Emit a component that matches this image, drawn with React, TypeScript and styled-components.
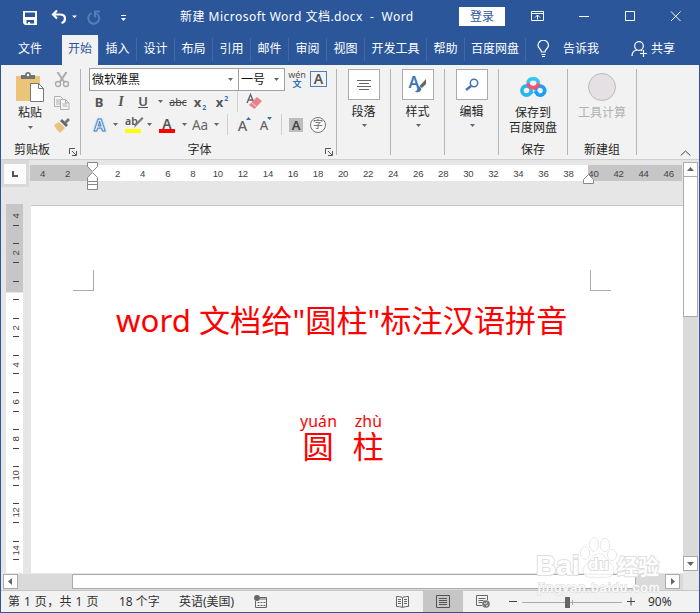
import React from "react";
import styled, { createGlobalStyle, css } from "styled-components";

const BLUE = "#2b579a";
const GRAY = "#666666";

const GlobalStyle = createGlobalStyle`
  * { box-sizing: border-box; }
  body { margin: 0; overflow: hidden; }
  svg { display: block; flex: none; }
`;

const Window = styled.div`
  position: relative;
  width: 700px;
  height: 613px;
  display: flex;
  flex-direction: column;
  border: solid ${BLUE};
  border-width: 0 1px 1px;
  background: #e6e6e6;
  color: #262626;
  font: 12px/16px "Noto Sans", "Noto Sans CJK SC", sans-serif;
  white-space: nowrap;
  overflow: hidden;
`;

/* ---------- title bar ---------- */
const TitleBar = styled.header`
  height: 35px;
  flex: none;
  display: flex;
  align-items: center;
  padding-bottom: 3px;
  background: ${BLUE};
  color: #fff;
`;
const QuickAccess = styled.div`
  width: 179px;
  padding: 4px 0 0 21px;
  display: flex;
`;
const Title = styled.div`
  width: 279px;
  padding-top: 1px;
  white-space: pre;
  letter-spacing: 0.48px;
`;
const LoginButton = styled.button`
  width: 46px;
  height: 19px;
  margin-top: 1px;
  padding: 0;
  border: 0;
  background: #fff;
  color: ${BLUE};
  font: inherit;
  line-height: 19px;
`;
const WindowControls = styled.div`
  display: flex;
  margin-left: 25px;
`;

/* ---------- tabs ---------- */
const TabBar = styled.nav`
  height: 30px;
  flex: none;
  display: flex;
  background: ${BLUE};
  color: #fff;
`;
const Tab = styled.div<{ $w: number; $active?: boolean; $rule?: boolean; $file?: boolean }>`
  width: ${(p) => p.$w}px;
  display: flex;
  justify-content: center;
  line-height: 28px;
  padding-right: ${(p) => (p.$file ? 3 : 0)}px;
  ${(p) => p.$active && css`background: #f2f2f2; color: ${BLUE};`}
  ${(p) =>
    p.$rule &&
    css`
      padding-left: 1px;
      background: linear-gradient(#44699f, #44699f) 0 3px / 1px 23px no-repeat;
    `}
`;
const TabTool = styled.div<{ $ml: number; $gap: number }>`
  display: flex;
  align-items: center;
  gap: ${(p) => p.$gap}px;
  height: 28px;
  margin-left: ${(p) => p.$ml}px;
`;

/* ---------- ribbon ---------- */
const Ribbon = styled.section`
  height: 95px;
  flex: none;
  display: flex;
  padding-top: 4px;
  background: #f2f2f2;
  border-bottom: 1px solid #d0d0d0;
`;
const Group = styled.div<{ $w: number }>`
  width: ${(p) => p.$w}px;
  height: 86px;
  display: flex;
  flex-direction: column;
  border-right: 1px solid #b4b4b4;
`;
const GroupBody = styled.div<{ $center?: boolean }>`
  height: 72px;
  flex: none;
  display: flex;
  ${(p) => p.$center && css`flex-direction: column; align-items: center;`}
`;
const GroupFooter = styled.div`
  height: 16px;
  display: flex;
`;
const GroupLabel = styled.div<{ $inset?: number }>`
  flex: 1;
  text-align: center;
  line-height: 17px;
  padding-right: ${(p) => p.$inset ?? 0}px;
`;
const Launcher = styled.div<{ $mr: number }>`
  margin: 7px ${(p) => p.$mr}px 0 0;
`;
const PasteButton = styled.div`
  width: 36px;
  margin-left: 11px;
  padding-top: 3px;
  display: flex;
  flex-direction: column;
  align-items: center;
`;
const PasteText = styled.div`
  margin: 2px 0 5px;
`;
const ClipColumn = styled.div`
  display: flex;
  flex-direction: column;
  gap: 7px;
  padding: 3px 0 0 6px;
`;
const FontPanel = styled.div`
  padding-left: 8px;
`;
const ComboRow = styled.div`
  display: flex;
  height: 22px;
  margin-top: -1px;
`;
const Combo = styled.div<{ $w: number }>`
  width: ${(p) => p.$w}px;
  height: 23px;
  display: flex;
  align-items: center;
  justify-content: space-between;
  padding: 0 5px 0 2px;
  border: 1px solid #a0a0a0;
  background: #fff;
  color: #111;
  & + & { margin-left: -1px; }
`;
const Phonetic = styled.div`
  width: 24px;
  text-align: center;
  font-size: 9px;
  line-height: 9px;
  padding-top: 2px;
  color: #555;
`;
const PhoneticBase = styled.div`
  color: #2e74b5;
  font-weight: 700;
  font-size: 9px;
  line-height: 9px;
`;
const BoxedLetter = styled.div`
  width: 17px;
  height: 16px;
  margin: 3px 0 0 1px;
  border: 1px solid #4a82bd;
  font-size: 14px;
  font-weight: 600;
  line-height: 14px;
  text-align: center;
  color: #555;
`;
const ToolRow = styled.div<{ $h: number }>`
  display: flex;
  height: ${(p) => p.$h}px;
`;
const Tool = styled.div<{ $w: number }>`
  width: ${(p) => p.$w}px;
  display: flex;
  align-items: center;
  justify-content: center;
  color: ${GRAY};
  font-size: 13.5px;
`;
const Bold = styled.b`font-size: 13px; color: #555;`;
const Italic = styled.i`font: italic 700 14px "Liberation Serif", serif; color: #555;`;
const Underlined = styled.span`
  font-weight: 600;
  font-size: 13px;
  line-height: 12px;
  border-bottom: 1px solid #555;
  color: #555;
`;
const Strike = styled.s`font-size: 10.5px; color: #444;`;
const Script = styled.span<{ $up?: boolean }>`
  font-size: 13px;
  font-weight: 700;
  color: #555;
  small {
    font-size: 7px;
    color: #2e74b5;
    margin-left: 1px;
    vertical-align: ${(p) => (p.$up ? "6px" : "-3px")};
    line-height: 0;
  }
`;
const Divider = styled.div`
  width: 1px;
  height: 21px;
  background: #d0d0d0;
`;
const EffectLetter = styled.span`
  font: 700 16px/18px "Noto Sans", sans-serif;
  color: #fff;
  -webkit-text-stroke: 1px #4584c4;
  text-shadow: 0 0 3px #8ab8e6;
`;
const ColorLetter = styled.div<{ $bar: string; $small?: boolean }>`
  width: 16px;
  height: 17px;
  text-align: center;
  font-size: ${(p) => (p.$small ? 10.5 : 14)}px;
  font-weight: 600;
  line-height: ${(p) => (p.$small ? 10 : 15)}px;
  color: #555;
  border-bottom: 4px solid ${(p) => p.$bar};
`;
const HighlightMark = styled(ColorLetter)`
  display: flex;
  svg { margin-left: -6px; }
`;
const Grow = styled.span<{ $size: number }>`
  display: flex;
  align-items: flex-start;
  font-size: ${(p) => p.$size}px;
  font-weight: 500;
  svg { margin-left: -1px; }
`;
const Shaded = styled.div`
  width: 14px;
  height: 14px;
  background: #bdbdbd;
  color: #444;
  font-size: 13px;
  font-weight: 600;
  line-height: 14px;
  text-align: center;
`;
const Circled = styled.div`
  width: 16px;
  height: 16px;
  border: 1px solid #777;
  border-radius: 50%;
  font-size: 10px;
  line-height: 13px;
  text-align: center;
  background: #fafafa;
`;
const IconBox = styled.div`
  width: 32px;
  height: 31px;
  display: flex;
  align-items: center;
  justify-content: center;
  border: 1px solid #ababab;
  background: #fff;
`;
const StyleLetter = styled.span`
  display: flex;
  margin-top: -2px;
  font-size: 16px;
  font-weight: 600;
  line-height: 15px;
  color: #3f76b5;
  svg { margin: 4px 0 0 -4px; }
`;
const BigText = styled.div<{ $mt: number; $muted?: boolean }>`
  margin-top: ${(p) => p.$mt}px;
  line-height: 15px;
  text-align: center;
  color: ${(p) => (p.$muted ? "#b1b1b1" : "inherit")};
`;
const ArrowSlot = styled.div`margin: 5px 0 0 2px;`;
const DiskSlot = styled.div`margin-top: 7px;`;
const Disc = styled.div`
  width: 28px;
  height: 28px;
  margin-top: 4px;
  border: 1px solid #bcbcbc;
  border-radius: 50%;
  background: #e4e0e4;
`;
const Collapse = styled.div`
  margin: 81px 0 0 43px;
`;

/* ---------- editor ---------- */
const Editor = styled.main`
  height: 431px;
  flex: none;
  display: flex;
  border-bottom: 1px solid #c6c6c6;
`;
const Canvas = styled.div`
  width: 682px;
  display: flex;
  flex-direction: column;
`;
const RulerRow = styled.div`
  position: relative;
  height: 45px;
  flex: none;
  display: flex;
`;
const TabStop = styled.div`
  width: 28px;
  height: 27px;
  display: flex;
  align-items: center;
  justify-content: center;
  background: #fbfbfb;
  border: solid #d9d9d9;
  border-width: 4px 3px 3px;
`;
const RulerBand = styled.div`
  display: flex;
  width: 652px;
  height: 16px;
  margin: 5px 0 0 1px;
  background: linear-gradient(90deg, #c6c6c6 62px, #fff 62px 558px, #c6c6c6 558px);
  font: 9.6px/17px "Liberation Sans", sans-serif;
  letter-spacing: -0.2px;
  color: #444;
  overflow: hidden;
`;
const RulerMark = styled.span<{ $gap?: boolean }>`
  width: 25.05px;
  flex: none;
  text-align: center;
  margin-left: ${(p) => (p.$gap ? 25 : 0)}px;
`;
const IndentMarker = styled.div<{ $x: number; $y: number }>`
  position: absolute;
  left: ${(p) => p.$x}px;
  top: ${(p) => p.$y}px;
`;
const DocumentRow = styled.div`
  height: 368px;
  flex: none;
  display: flex;
`;
const SideRuler = styled.div`
  width: 17px;
  height: 369px;
  margin: -1px 0 0 5px;
  overflow: hidden;
  background: linear-gradient(#c6c6c6 88px, #e6e6e6 88px 89px, #fff 89px);
`;
const SideMark = styled.div<{ $first?: boolean }>`
  height: 37.15px;
  margin-top: ${(p) => (p.$first ? -6.5 : 0)}px;
  display: flex;
  flex-direction: column;
  align-items: center;
  justify-content: center;
  padding-left: 2px;
  &::before, &::after {
    content: "";
    width: 6px;
    height: 1px;
    background: #444;
  }
  &::before { visibility: ${(p) => (p.$first ? "hidden" : "visible")}; }
`;
const SideNumber = styled.span`
  height: 17.6px;
  writing-mode: vertical-rl;
  transform: rotate(180deg);
  text-align: center;
  font: 9.6px/12px "Liberation Sans", sans-serif;
  letter-spacing: -0.2px;
  color: #444;
`;
const Page = styled.article`
  width: 652px;
  margin-left: 8px;
  border-top: 1px solid #c6c6c6;
  background: #fff;
  color: #ff0000;
`;
const MarginCorners = styled.div`
  display: flex;
  justify-content: space-between;
  padding: 64px 72px 0 42px;
`;
const Corner = styled.div<{ $side: "left" | "right" }>`
  width: 21px;
  height: 21px;
  border-bottom: 1px solid #ababab;
  border-${(p) => (p.$side === "left" ? "right" : "left")}: 1px solid #ababab;
`;
const Heading = styled.h1`
  margin: 6px 0 0 85px;
  font: 400 31.2px/46px "Noto Sans", "Noto Sans CJK SC", sans-serif;
`;
const RubyLine = styled.div`
  display: flex;
  gap: 14px;
  margin: 69px 0 0 269px;
`;
const RubyPair = styled.div`
  display: flex;
  flex-direction: column;
  align-items: center;
  width: 36px;
  font-size: 31.2px;
  line-height: 32px;
`;
const Pinyin = styled.span`
  font-size: 15.8px;
  line-height: 18px;
  padding-left: 1px;
  letter-spacing: 0.2px;
`;
const HScroll = styled.div`
  height: 16px;
  margin-top: 1px;
  display: flex;
  margin-left: 2px;
  background: #dadada;
`;
const ScrollButton = styled.div`
  width: 15px;
  height: 15px;
  flex: none;
  display: flex;
  align-items: center;
  justify-content: center;
  border: 1px solid #ababab;
  background: #fff;
`;
const HThumb = styled.div`
  width: 564px;
  height: 15px;
  margin: 0 29px 0 54px;
  border: 1px solid #ababab;
  background: #fff;
`;
const VScroll = styled.div`
  width: 15px;
  height: 409px;
  margin-top: 2px;
  display: flex;
  flex-direction: column;
  background: #dadada;
`;
const VThumb = styled.div`
  height: 141px;
  margin-top: -1px;
  margin-bottom: auto;
  border: 1px solid #ababab;
  background: #fff;
`;

/* ---------- status bar ---------- */
const StatusBar = styled.footer`
  height: 21px;
  flex: none;
  display: flex;
  align-items: center;
  background: #f2f2f2;
  color: #333;
`;
const StatusItem = styled.div<{ $w: number }>`
  width: ${(p) => p.$w}px;
`;
const PageCount = styled(StatusItem)`
  padding-left: 7px;
  letter-spacing: 0.42px;
`;
const ViewButton = styled.div<{ $active?: boolean }>`
  width: 40px;
  height: 21px;
  display: flex;
  align-items: center;
  justify-content: center;
  background: ${(p) => (p.$active ? "#c6c6c6" : "transparent")};
`;
const ZoomControl = styled.div`
  display: flex;
  align-items: center;
  margin-left: 5px;
  gap: 13px;
`;

/* ---------- watermark ---------- */
const Watermark = styled.div`
  position: absolute;
  left: 535px;
  top: 536px;
  width: 128px;
  color: #fff;
  -webkit-text-stroke: 2px #dedede;
  paint-order: stroke fill;
  font-family: "Liberation Sans", "Noto Sans CJK SC", sans-serif;
`;
const WatermarkTop = styled.div`
  display: flex;
  align-items: flex-end;
  height: 43px;
  font-weight: 700;
`;
const Bai = styled.span`font-size: 28px; line-height: 30px; width: 43px; margin-bottom: -2px;`;
const Paw = styled.div`
  position: relative;
  width: 38px;
  height: 43px;
`;
const Du = styled.span`
  position: absolute;
  left: 9px;
  top: 20px;
  font-size: 17px;
  line-height: 18px;
`;
const Experience = styled.span`font-size: 21px; line-height: 26px; margin: 0 0 -1px 0;`;
const WatermarkUrl = styled.div`
  font-size: 13px;
  line-height: 15px;
  letter-spacing: 1.05px;
  padding: 1px 0 0 2px;
  -webkit-text-stroke-width: 1.4px;
`;

const Arrow = ({ color = GRAY }: { color?: string }) => (
  <svg width="5" height="3"><path d="M0 0h5L2.500 3z" fill={color} /></svg>
);
const LauncherIcon = () => (
  <svg width="8" height="8" fill="none" stroke="#555">
    <path d="M.5 6V.5H6M3 3l4 4M7.500 3v4.500H3" />
  </svg>
);
const Triangle = ({ d }: { d: string }) => (
  <svg width="7" height="7"><path d={d} fill="#666" /></svg>
);

const QuickIcons = () => (
  <svg width="110" height="18" fill="none" stroke="#fff">
    <path
      d="M1 2h14v14H3l-2-2zM3 3.500v4.500h10V3.500zM4.500 11v3.500H6V13h2v1.500h4V11z"
      fill="#fff"
      fillRule="evenodd"
      stroke="none"
    />
    <path d="M35 1.500l-4 4 4 4M31.500 5.500H38c3 0 5 1.500 5 4s-1.500 4-3.500 4.500" strokeWidth="2.200" />
    <path d="M50 6.500h5L52.500 9z" fill="#fff" stroke="none" />
    <path d="M69.500 4.200a5.500 5.500 0 1 0 5 .3M73 8.500V2.500h5" stroke="#597db2" strokeWidth="2" />
    <path d="M99 6.500h5" />
    <path d="M99 9h5l-2.500 3z" fill="#fff" stroke="none" />
  </svg>
);

const WindowIcons = () => (
  <svg width="155" height="16" fill="none" stroke="#fff">
    <path d="M1.500 3.500h12v9h-12zM1.500 5.500h12M7.500 11.500V7M5 9.500l2.500-2.500L10 9.500" />
    <path d="M49 8.500h10M95.500 3.500h9v9h-9zM141 3.500l9.500 9.500M150.500 3.500L141 13" />
  </svg>
);

const PasteIcon = () => (
  <svg width="28" height="31">
    <path d="M0 4h24v25H0z" fill="#ecc478" />
    <path d="M5 3h4c0-4 6-4 6 0h4v4H5z" fill="#737373" />
    <circle cx="12" cy="3" r="1.200" fill="#fff" />
    <path d="M14.500 11.500h8l5 5v13h-13z" fill="#fff" stroke="#777" />
    <path d="M22.500 11.500v5h5" fill="none" stroke="#777" />
  </svg>
);
const CutIcon = () => (
  <svg width="16" height="16" fill="none" stroke="#aaa">
    <path d="M3.500 0l7 10.500M12.500 0l-7 10.500" strokeWidth="2" />
    <circle cx="4" cy="12" r="2.500" strokeWidth="1.400" /><circle cx="12" cy="12" r="2.500" strokeWidth="1.400" />
  </svg>
);
const CopyIcon = () => (
  <svg width="16" height="16" fill="#f5f5f5" stroke="#b0b0b0">
    <path d="M.5 1.500h6l3 3v7h-9zM2 5h4M2 7h4M2 9h4" />
    <path d="M6.500 4.500h5l3.500 3.500v6.500H6.500zM11.500 4.500V8H15M8.500 9h4M8.500 11h5" />
  </svg>
);
const PainterIcon = () => (
  <svg width="17" height="15">
    <path d="M0 7l5-3 6 6-5 5c-2-2-4-4-6-8z" fill="#ecc080" />
    <path d="M6 3l2-2 6 6-2 2z" fill="#666" />
    <path d="M10 4l4-4 2 2-4 4z" fill="#777" />
  </svg>
);
const EraserIcon = () => (
  <svg width="17" height="17">
    <path d="M1 10L4.500 1.500 8 10M2.500 7h4" stroke="#666" fill="none" strokeWidth="1.400" />
    <path d="M11 4l5 4-7.500 8L3 12z" fill="#e8808e" />
    <path d="M5.500 9.500l5 4.300" stroke="#f6d6da" />
  </svg>
);
const DiskIcon = () => (
  <svg width="27" height="22" fill="none" strokeWidth="3.600">
    <circle cx="6.500" cy="14.500" r="4.600" stroke="#27b6ee" />
    <path d="M15.500 14.500a4.600 4.600 0 1 1 1.500 3.500" stroke="#1b9ff6" />
    <path d="M10 17.500l2.500-2.500" stroke="#27b6ee" />
    <path d="M15 15l3 3.500" stroke="#1b9ff6" />
    <path d="M7.800 7.200a5.500 5.500 0 0 1 10.800 0" stroke="#2fc8f2" />
    <path d="M7.800 7.200a5.500 5.500 0 0 0 10.800 0" stroke="#f5536d" />
  </svg>
);
const Hourglass = () => (
  <svg width="12" height="29" fill="#fff" stroke="#888">
    <path d="M.5.500h10v4l-5 5-5-5zM5.500 10.500l5 5v4H.5v-4zM.5 19.500h10v8H.5zM.5 22.500h10" />
  </svg>
);

const rulerMarks = Array.from({ length: 23 }, (_, i) => (i + 1) * 2);
const sideMarks = ["4", "2", "", "2", "4", "6", "8", "10", "12", "14"];
const tabs: [string, number][] = [
  ["插入", 38], ["设计", 38], ["布局", 38], ["引用", 38], ["邮件", 38], ["审阅", 38],
  ["视图", 38], ["开发工具", 62], ["帮助", 38], ["百度网盘", 61],
];

const CompactGroup = ({ label, children }: { label: string; children: React.ReactNode }) => (
  <Group $w={54}>
    <GroupBody $center>
      <IconBox>{children}</IconBox>
      <BigText $mt={4}>{label}</BigText>
      <ArrowSlot><Arrow /></ArrowSlot>
    </GroupBody>
  </Group>
);

export default function App() {
  return (
    <Window>
      <GlobalStyle />
      <TitleBar>
        <QuickAccess><QuickIcons /></QuickAccess>
        <Title>{"新建 Microsoft Word 文档.docx  -  Word"}</Title>
        <LoginButton>登录</LoginButton>
        <WindowControls><WindowIcons /></WindowControls>
      </TitleBar>

      <TabBar>
        <Tab $w={61} $file>文件</Tab>
        <Tab $w={36} $active>开始</Tab>
        {tabs.map(([name, w]) => <Tab key={name} $w={w} $rule>{name}</Tab>)}
        <Tab $w={1} $rule />
        <TabTool $ml={11} $gap={13}>
          <svg width="13" height="18" fill="none" stroke="#fff" strokeWidth="1.200">
            <path d="M4.500 12c0-3-3.500-3.500-3.500-6.500a5 5 0 0 1 10.500 0c0 3-3.500 3.500-3.500 6.500zM4.500 14.500h4M5 16.500h3" />
          </svg>
          告诉我
        </TabTool>
        <TabTool $ml={32} $gap={3}>
          <svg width="17" height="18" fill="none" stroke="#fff" strokeWidth="1.200">
            <circle cx="8" cy="6" r="4.300" />
            <path d="M1 16c0-3 2-5.500 5-6M10 10l1 1M12.500 10v7M9 13.500h7" />
          </svg>
          共享
        </TabTool>
      </TabBar>

      <Ribbon>
        <Group $w={80}>
          <GroupBody>
            <PasteButton>
              <PasteIcon />
              <PasteText>粘贴</PasteText>
              <Arrow />
            </PasteButton>
            <ClipColumn><CutIcon /><CopyIcon /><PainterIcon /></ClipColumn>
          </GroupBody>
          <GroupFooter>
            <GroupLabel $inset={6}>剪贴板</GroupLabel>
            <Launcher $mr={3}><LauncherIcon /></Launcher>
          </GroupFooter>
        </Group>

        <Group $w={256}>
          <GroupBody>
            <FontPanel>
              <ComboRow>
                <Combo $w={150}>微软雅黑<Arrow /></Combo>
                <Combo $w={47}>一号<Arrow /></Combo>
                <Phonetic>wén<PhoneticBase>文</PhoneticBase></Phonetic>
                <BoxedLetter>A</BoxedLetter>
              </ComboRow>
              <ToolRow $h={23}>
                <Tool $w={20}><Bold>B</Bold></Tool>
                <Tool $w={24}><Italic>I</Italic></Tool>
                <Tool $w={20}><Underlined>U</Underlined></Tool>
                <Tool $w={14}><Arrow /></Tool>
                <Tool $w={22}><Strike>abc</Strike></Tool>
                <Tool $w={22}><Script>x<small>2</small></Script></Tool>
                <Tool $w={22}><Script $up>x<small>2</small></Script></Tool>
                <Tool $w={9}><Divider /></Tool>
                <Tool $w={24}><EraserIcon /></Tool>
              </ToolRow>
              <ToolRow $h={23}>
                <Tool $w={21}><EffectLetter>A</EffectLetter></Tool>
                <Tool $w={10}><Arrow /></Tool>
                <Tool $w={26}>
                  <HighlightMark $bar="#ffff00" $small>
                    ab
                    <svg width="12" height="13"><path d="M2 12l1-4 7-7 1.500 1.500L5 9z" fill="#777" /></svg>
                  </HighlightMark>
                </Tool>
                <Tool $w={7}><Arrow /></Tool>
                <Tool $w={28}><ColorLetter $bar="#ff0000">A</ColorLetter></Tool>
                <Tool $w={6}><Arrow /></Tool>
                <Tool $w={26}>Aa</Tool>
                <Tool $w={6}><Arrow /></Tool>
                <Tool $w={16}><Divider /></Tool>
                <Tool $w={19}>
                  <Grow $size={14.5}>A<svg width="5" height="4"><path d="M0 3l2.500-3L5 3z" fill="#2e74b5" /></svg></Grow>
                </Tool>
                <Tool $w={24}>
                  <Grow $size={13}>A<svg width="5" height="4"><path d="M0 0h5L2.500 3z" fill="#2e74b5" /></svg></Grow>
                </Tool>
                <Tool $w={6}><Divider /></Tool>
                <Tool $w={24}><Shaded>A</Shaded></Tool>
                <Tool $w={20}><Circled>字</Circled></Tool>
              </ToolRow>
            </FontPanel>
          </GroupBody>
          <GroupFooter>
            <GroupLabel $inset={7}>字体</GroupLabel>
            <Launcher $mr={3}><LauncherIcon /></Launcher>
          </GroupFooter>
        </Group>

        <CompactGroup label="段落">
          <svg width="14" height="12" stroke="#666">
            <path d="M0 1.500h14M2 4.500h10M0 7.500h14M2 10.500h10" />
          </svg>
        </CompactGroup>
        <CompactGroup label="样式">
          <StyleLetter>
            A
            <svg width="11" height="14">
              <path d="M11 0v5L7 9 4.500 7z" fill="#666" />
              <path d="M1 12c2 0 0-4 3-4.500C7 8 7 12 4 13c-2 .5-4 .3-4-.5z" fill="#3f76b5" />
            </svg>
          </StyleLetter>
        </CompactGroup>
        <CompactGroup label="编辑">
          <svg width="14" height="14" fill="none" stroke="#3f76b5">
            <circle cx="9" cy="5" r="3.700" strokeWidth="1.500" /><path d="M6 8l-5 4" strokeWidth="2.400" />
          </svg>
        </CompactGroup>

        <Group $w={69}>
          <GroupBody $center>
            <DiskSlot><DiskIcon /></DiskSlot>
            <BigText $mt={7}>保存到<br />百度网盘</BigText>
          </GroupBody>
          <GroupFooter><GroupLabel>保存</GroupLabel></GroupFooter>
        </Group>
        <Group $w={69}>
          <GroupBody $center>
            <Disc />
            <BigText $mt={4} $muted>工具计算</BigText>
          </GroupBody>
          <GroupFooter><GroupLabel>新建组</GroupLabel></GroupFooter>
        </Group>
        <Collapse>
          <svg width="12" height="7" fill="none" stroke="#444"><path d="M.7 5.500L5.500 1l4.800 4.500" /></svg>
        </Collapse>
      </Ribbon>

      <Editor>
        <Canvas>
          <RulerRow>
            <TabStop>
              <svg width="6" height="6" fill="none" stroke="#555" strokeWidth="2"><path d="M1 0v5h5" /></svg>
            </TabStop>
            <RulerBand>
              <RulerMark>4</RulerMark>
              <RulerMark>2</RulerMark>
              {rulerMarks.map((n) => <RulerMark key={n} $gap={n === 2}>{n}</RulerMark>)}
            </RulerBand>
            <IndentMarker $x={86} $y={2}><Hourglass /></IndentMarker>
            <IndentMarker $x={582} $y={14}>
              <svg width="12" height="11" fill="#fff" stroke="#888"><path d="M5.500.500l5 5v4H.5v-4z" /></svg>
            </IndentMarker>
          </RulerRow>
          <DocumentRow>
            <SideRuler>
              {sideMarks.map((n, i) => (
                <SideMark key={i} $first={i === 0}><SideNumber>{n}</SideNumber></SideMark>
              ))}
            </SideRuler>
            <Page>
              <MarginCorners><Corner $side="left" /><Corner $side="right" /></MarginCorners>
              <Heading>word 文档给"圆柱"标注汉语拼音</Heading>
              <RubyLine>
                <RubyPair><Pinyin>yuán</Pinyin>圆</RubyPair>
                <RubyPair><Pinyin>zhù</Pinyin>柱</RubyPair>
              </RubyLine>
            </Page>
          </DocumentRow>
          <HScroll>
            <ScrollButton><Triangle d="M5 0v7L1 3.500z" /></ScrollButton>
            <HThumb />
            <ScrollButton><Triangle d="M2 0v7l4-3.500z" /></ScrollButton>
          </HScroll>
        </Canvas>
        <VScroll>
          <ScrollButton><Triangle d="M0 5h7L3.500 1z" /></ScrollButton>
          <VThumb />
          <ScrollButton><Triangle d="M0 2h7L3.500 6z" /></ScrollButton>
        </VScroll>
      </Editor>

      <StatusBar>
        <PageCount $w={118}>第 1 页，共 1 页</PageCount>
        <StatusItem $w={60}>18 个字</StatusItem>
        <StatusItem $w={75}>英语(美国)</StatusItem>
        <StatusItem $w={129}>
          <svg width="14" height="14" fill="none" stroke="#666">
            <path d="M1.500 6v6.500h11v-10H6M6 4h7" /><circle cx="3" cy="3" r="3" fill="#666" stroke="none" />
            <path d="M3.500 7.500h8M3.500 10.500h8" strokeDasharray="2 1" />
          </svg>
        </StatusItem>
        <ViewButton>
          <svg width="14" height="14" fill="none" stroke="#666">
            <path d="M6.500 2.500c-2-1-4-1-6-1v10c2 0 4 0 6 1 2-1 4-1 6-1v-10c-2 0-4 0-6 1v10M2 4.500h3M2 6.500h3M2 8.500h3M8 4.500h3M8 6.500h3M8 8.500h3" />
          </svg>
        </ViewButton>
        <ViewButton $active>
          <svg width="14" height="14" fill="none" stroke="#555">
            <path d="M.5.500h13v12H.5zM3 3.500h8M3 5.500h8M3 7.500h8M3 9.500h8" />
          </svg>
        </ViewButton>
        <ViewButton>
          <svg width="14" height="14" fill="none" stroke="#666">
            <path d="M6 10.500H.5v-10h11V5M2.500 3.500h7M2.500 5.500h5M2.500 7.500h4" />
            <circle cx="10" cy="9" r="3.800" fill="#777" stroke="none" /><path d="M8 8l2 1 1-2M10 11l2-1" stroke="#ddd" />
          </svg>
        </ViewButton>
        <ZoomControl>
          <svg width="127" height="12" fill="none" stroke="#444">
            <path d="M1 5.500h8M119 5.500h8M123 1.500v8" />
            <path d="M14 6.500h100M64.500 4v5" stroke="#aaa" /><path d="M57 1h5v11h-5z" fill="#666" stroke="none" />
          </svg>
          90%
        </ZoomControl>
      </StatusBar>

      <Watermark>
        <WatermarkTop>
          <Bai>Bai</Bai>
          <Paw>
            <svg width="39" height="43" fill="#fff" fillOpacity=".8" stroke="#d8d8d8">
              <ellipse cx="6" cy="17" rx="4.500" ry="6" /><ellipse cx="15" cy="8.500" rx="4.500" ry="6.500" />
              <ellipse cx="26" cy="9" rx="4.500" ry="6.500" /><ellipse cx="33" cy="19" rx="4.300" ry="5.500" />
              <path d="M20 18c6 0 8 7 13 12 4 5 1 11-5 11-5 0-12 0-17 0-6 0-9-6-5-11 5-5 8-12 14-12z" />
            </svg>
            <Du>du</Du>
          </Paw>
          <Experience>经验</Experience>
        </WatermarkTop>
        <WatermarkUrl>jingyan.baidu.com</WatermarkUrl>
      </Watermark>
    </Window>
  );
}
